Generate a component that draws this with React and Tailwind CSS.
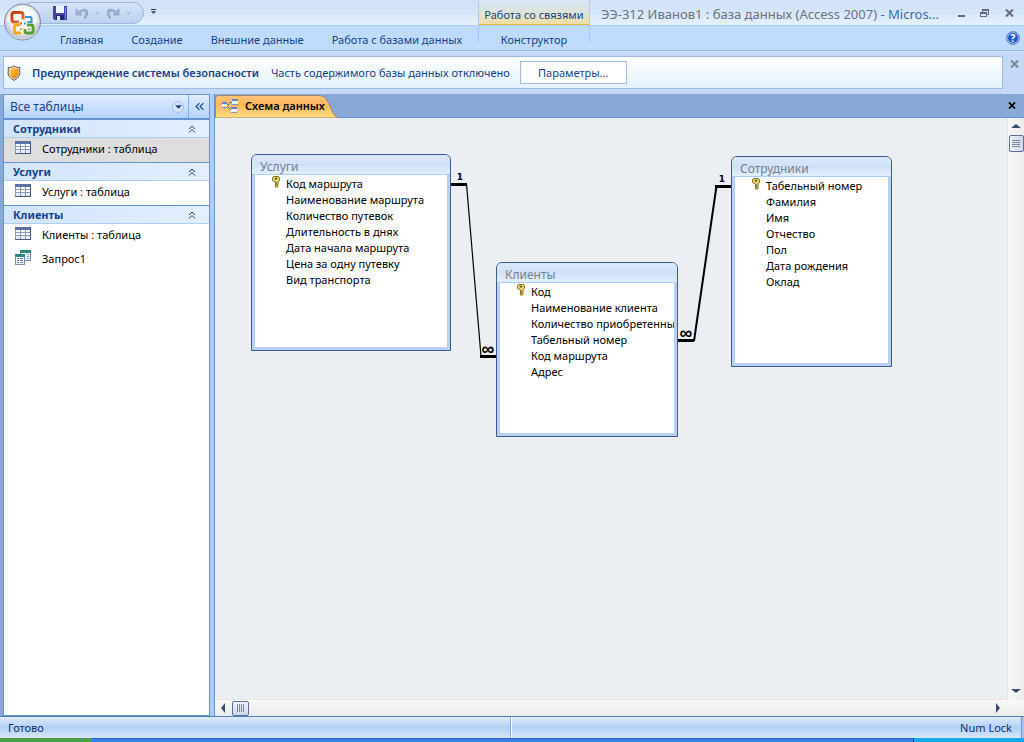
const ribbonTabs = ["Главная", "Создание", "Внешние данные", "Работа с базами данных"]

const navGroups = [
  { name: "Сотрудники", items: [{ label: "Сотрудники : таблица", kind: "table", selected: true }] },
  { name: "Услуги", items: [{ label: "Услуги : таблица", kind: "table" }] },
  {
    name: "Клиенты",
    items: [
      { label: "Клиенты : таблица", kind: "table" },
      { label: "Запрос1", kind: "query" },
    ],
  },
]

const schema = [
  {
    name: "Услуги",
    place: "left-[36px] top-[36px] w-[200px] h-[197px]",
    fields: [
      "Код маршрута",
      "Наименование маршрута",
      "Количество путевок",
      "Длительность в днях",
      "Дата начала маршрута",
      "Цена за одну путевку",
      "Вид транспорта",
    ],
  },
  {
    name: "Клиенты",
    place: "left-[281px] top-[144px] w-[182px] h-[175px]",
    fields: [
      "Код",
      "Наименование клиента",
      "Количество приобретенны",
      "Табельный номер",
      "Код маршрута",
      "Адрес",
    ],
  },
  {
    name: "Сотрудники",
    place: "left-[516px] top-[38px] w-[161px] h-[211px]",
    fields: ["Табельный номер", "Фамилия", "Имя", "Отчество", "Пол", "Дата рождения", "Оклад"],
  },
]

function OfficeLogo() {
  return (
    <svg viewBox="0 0 40 40" className="h-10 w-10" fill="none">
      <defs>
        <radialGradient id="orb" cx="50%" cy="45%" r="55%">
          <stop offset="0" stopColor="#ffffff" />
          <stop offset="0.6" stopColor="#f0f1f5" />
          <stop offset="0.88" stopColor="#c0c8d6" />
          <stop offset="1" stopColor="#eef3fa" />
        </radialGradient>
        <linearGradient id="red" x1="0" y1="0" x2="1" y2="1">
          <stop offset="0" stopColor="#c9380f" />
          <stop offset="1" stopColor="#f0762c" />
        </linearGradient>
      </defs>
      <circle cx="20.500" cy="20" r="18" fill="url(#orb)" stroke="#7f8ca3" />
      <path d="M4 20a16.500 16.500 0 0 1 33 0c-8 3-25 3-33 0z" fill="#fff" opacity="0.5" />
      <path d="M17 20h-5q-2 0-2-2v-5.500q0-2 2-2h7q2 0 2 2v5" stroke="url(#red)" strokeWidth="3" />
      <path d="M23 15h5q1.500 0 1.500 1.500v3.500h-4" stroke="#3f92dc" strokeWidth="2.200" />
      <path d="M18 23h-3.500q-2 0-2 2v4.500q0 1.500 1.500 1.500h5" stroke="#f5ab1d" strokeWidth="2.800" />
      <path d="M25 23h4.500q1.500 0 1.500 1.500v5q0 1.500-1.500 1.500h-5q-1.500 0-1.500-1.500V27" stroke="#5aa02e" strokeWidth="2.800" />
      <path d="M18 20.500h2v2h-2z" fill="#e85a20" />
      <path d="M22 20.500h2v2h-2z" fill="#3f92dc" />
      <path d="M18 26h2v2h-2z" fill="#f5ab1d" />
      <path d="M26 26h2v2h-2z" fill="#8cc152" />
    </svg>
  )
}

function SaveIcon() {
  return (
    <svg viewBox="0 0 14 14" className="h-[14px] w-[14px]" shapeRendering="crispEdges">
      <path d="M0 0h14v14H1l-1-1z" fill="#4145a8" />
      <path d="M3 0h8v7H3z" fill="#eef2fb" />
      <path d="M3 9h8v5H3z" fill="#25276e" />
      <path d="M4 10h3v4H4z" fill="#dfe6f5" />
      <path d="M12 1h1v12h-1z" fill="#7d84d6" />
    </svg>
  )
}

function UndoIcon({ flip }) {
  return (
    <svg viewBox="0 0 14 14" className={flip ? "h-[14px] w-[14px] -scale-x-100" : "h-[14px] w-[14px]"}>
      <path d="M1 3v6h6L5 7q3-3 5-1.500T9 12l1 .5q4-3.500 2.500-7.500T4 5.500z" fill="#9fb2d4" stroke="#8ba1c8" strokeWidth="0.8" />
    </svg>
  )
}

function Caret({ className }) {
  return (
    <svg viewBox="0 0 6 3" className={className}>
      <path d="M0 0h6L3 3z" fill="currentColor" />
    </svg>
  )
}

function ShieldIcon() {
  return (
    <svg viewBox="0 0 14 16" className="h-4 w-[14px]">
      <defs>
        <linearGradient id="shield" x1="0" y1="0" x2="1" y2="1">
          <stop offset="0" stopColor="#ffe28a" />
          <stop offset="0.5" stopColor="#f9a21b" />
          <stop offset="1" stopColor="#d96a0c" />
        </linearGradient>
      </defs>
      <path d="M7 .7 9 2.200 13 2.500 12.600 5Q14.500 11.500 7 15.400-.5 11.500 1.400 5L1 2.500 5 2.200z" fill="#e8e8e8" stroke="#4a4a4a" strokeWidth="0.9" />
      <path d="M7 2.200 9 3.500 12 3.700 11.600 6Q12.800 10.800 7 14 1.200 10.800 2.400 6L2 3.700 5 3.500z" fill="url(#shield)" />
    </svg>
  )
}

function TableIcon() {
  return (
    <svg viewBox="0 0 16 13" className="mb-1 h-[13px] w-4 shrink-0" shapeRendering="crispEdges">
      <path d="M0 0h16v13H0z" fill="#8b9abb" />
      <path d="M0 0h16v3H0z" fill="#5b71a5" />
      <path d="M0 12h16v1H0zM15 0h1v13h-1z" fill="#48587f" />
      <g fill="#fff">
        <path d="M1 3h4v2H1zM6 3h4v2H6zM11 3h4v2h-4z" />
        <path d="M1 6h4v2H1zM6 6h4v2H6zM11 6h4v2h-4z" />
        <path d="M1 9h4v3H1zM6 9h4v3H6zM11 9h4v3h-4z" fill="#e6ebf5" />
      </g>
    </svg>
  )
}

function QueryIcon() {
  return (
    <svg viewBox="0 0 16 15" className="mb-1 h-[15px] w-4 shrink-0" shapeRendering="crispEdges">
      <path d="M5 0h11v11H5z" fill="#7a8db0" />
      <path d="M6 3h9v7H6z" fill="#f4f8fc" />
      <path d="M5 0h11v3H5z" fill="#2f8580" />
      <path d="M12 4h2v1h-2zM12 6h2v1h-2zM12 8h2v1h-2z" fill="#7a9ac8" />
      <path d="M0 4h10v11H0z" fill="#7a8db0" />
      <path d="M1 7h8v7H1z" fill="#f4f8fc" />
      <path d="M0 4h10v3H0z" fill="#2f8580" />
      <path d="M2 8h2v1H2zM5 8h3v1H5zM2 10h2v1H2zM5 10h3v1H5zM2 12h2v1H2zM5 12h3v1H5z" fill="#5f82ba" />
    </svg>
  )
}

function KeyIcon() {
  return (
    <svg viewBox="0 0 8 12" className="h-3 w-2">
      <path d="M1.500.5h5l1 1.500v2.500L6 6v4.500L4.500 11.500 3.500 11V6L.5 4.500V2z" fill="#e9d76c" stroke="#77681c" strokeWidth="0.9" />
      <path d="M3 2h2v1.200H3zM4.500 6v4" stroke="#77681c" strokeWidth="0.7" fill="#77681c" />
    </svg>
  )
}

function SchemaIcon() {
  return (
    <svg viewBox="0 0 16 14" className="h-[14px] w-4" shapeRendering="crispEdges">
      <path d="M5 6 10 3M5 7l4 4" stroke="#5b6f96" fill="none" />
      <path d="M0 4h5v5H0zM10 0h6v5h-6zM9 8h6v5H9z" fill="#e9f0fa" />
      <path d="M0 8h5v1H0zM10 5h6v1h-6zM9 13h6v1H9z" fill="#7f92b8" />
      <path d="M0 3h5v2H0zM10 0h6v2h-6zM9 8h6v2H9z" fill="#5a86cc" />
    </svg>
  )
}

function Cross({ className }) {
  return (
    <svg viewBox="0 0 9 8" className={className}>
      <path d="M1 .5 8 7.500M8 .5 1 7.500" stroke="currentColor" strokeWidth="2" />
    </svg>
  )
}

function Chevrons({ className }) {
  return (
    <svg viewBox="0 0 8 8" className={className} fill="none" stroke="currentColor">
      <path d="M1 4l3-3 3 3M1 7.500l3-3 3 3" />
    </svg>
  )
}

function Header() {
  return (
    <header className="relative shrink-0 bg-[#bfdbff]">
      <div className="flex h-[26px] border-b border-[#a9cdf3] bg-linear-to-b from-[#cfe0f7] via-[#d6e6fa] to-[#e6f1fd]">
        <div className="flex w-[478px] shrink-0 items-start pt-[2px] pl-[28px]">
          <div className="flex h-[22px] w-[116px] items-center rounded-r-full border border-[#9db7dc] bg-linear-to-b from-[#d5e3f6] to-[#bdd1ee] pl-[24px]">
            <button aria-label="Сохранить"><SaveIcon /></button>
            <button aria-label="Отменить" className="ml-2 flex items-center gap-[6px] text-[#a9b6cb]">
              <UndoIcon />
              <Caret className="h-[3px] w-[5px]" />
            </button>
            <button aria-label="Вернуть" className="ml-[6px] flex items-center gap-[6px] text-[#a9b6cb]">
              <UndoIcon flip />
              <Caret className="h-[3px] w-[5px]" />
            </button>
          </div>
          <button aria-label="Настройка панели" className="mt-[7px] ml-[7px] flex flex-col gap-px text-[#1c3d73]">
            <span className="h-px w-[5px] bg-current" />
            <Caret className="h-[3px] w-[5px]" />
          </button>
        </div>
        <div className="flex w-28 shrink-0 items-end justify-center border-x border-b border-x-[#b9cbe0] border-b-[#e8b93c] bg-linear-to-b from-[#d6e5f8] via-[#dfe3d6] to-[#f0dfa4] pb-px text-[11px] leading-4 whitespace-nowrap text-[#15428b]">
          Работа со связями
        </div>
        <h1 className="min-w-0 flex-1 truncate pt-[5px] pl-[11px] text-[13px] leading-[18px] text-[#6b7280]">
          ЭЭ-312 Иванов1 : база данных (Access 2007) <span className="text-[#3b6cb5]">- Micros...</span>
        </h1>
        <div className="flex w-[72px] shrink-0 items-start gap-[15px] pt-[9px] pl-[6px] text-[#636b7c]">
          <button aria-label="Свернуть" className="mt-[6px] h-[2px] w-[7px] bg-current" />
          <button aria-label="Развернуть">
            <svg viewBox="0 0 9 8" className="h-2 w-[9px]" shapeRendering="crispEdges">
              <path d="M2 0h7v6H7V5h1V2H3v1H2z" fill="currentColor" />
              <path d="M0 3h7v5H0zM1 5v2h5V5z" fill="currentColor" fillRule="evenodd" />
            </svg>
          </button>
          <button aria-label="Закрыть" className="ml-px"><Cross className="h-2 w-[9px]" /></button>
        </div>
      </div>
      <div className="flex h-[25px] border-b border-[#93b7e8] text-[11px] leading-4 text-[#15428b]">
        <nav className="flex w-[478px] shrink-0 items-center gap-[28px] pt-1 pl-[60px] whitespace-nowrap">
          {ribbonTabs.map((tab) => (
            <button key={tab}>{tab}</button>
          ))}
        </nav>
        <button className="mb-2 w-28 shrink-0 border-x border-[#a9c6ea] pt-[6px]">
          Конструктор
        </button>
        <div className="flex flex-1 items-center justify-end pr-1">
          <button
            aria-label="Справка"
            className="flex h-[14px] w-[14px] items-center justify-center rounded-full border border-[#6f93cf] bg-[#2159c7] text-[10px] font-bold text-white ring-1 ring-white/60 ring-inset"
          >
            ?
          </button>
        </div>
      </div>
      <button aria-label="Кнопка Office" className="absolute top-[2px] left-[2px]">
        <OfficeLogo />
      </button>
    </header>
  )
}

function MessageBar() {
  return (
    <div className="flex shrink-0 items-start border-t border-[#d5e6fb] bg-[#c3d9f7] pt-1 pr-[5px] pb-[5px] pl-[3px]">
      <div className="flex h-[33px] flex-1 items-center border border-[#9dbbdc] bg-linear-to-b from-white to-[#e2f2fd] pl-[3px] text-[11px] leading-4 whitespace-nowrap text-[#15428b]">
        <ShieldIcon />
        <strong className="ml-[11px] font-semibold">Предупреждение системы безопасности</strong>
        <span className="ml-3">Часть содержимого базы данных отключено</span>
        <button className="ml-[10px] h-[23px] w-[107px] border border-[#9dbbdc] bg-white">Параметры...</button>
      </div>
      <button aria-label="Закрыть сообщение" className="mt-1 ml-[7px] text-[#7d8694]">
        <Cross className="h-2 w-[9px]" />
      </button>
    </div>
  )
}

function NavPane() {
  return (
    <aside className="flex w-[215px] shrink-0 border-r border-[#6593cf] bg-[#a8cdff]">
      <div className="w-[3px] bg-[#88a9d8]" />
      <div className="flex w-[207px] flex-col border border-[#6593cf] bg-white">
        <div className="flex h-[25px] items-center border-b-2 border-[#6593cf] bg-linear-to-b from-[#e0edff] to-[#b3d3fc] pl-[6px] text-[12px] text-[#15428b]">
          <h2 className="flex-1 pt-px">Все таблицы</h2>
          <button
            aria-label="Выбор категории"
            className="mr-1 flex h-3 w-3 items-center justify-center rounded-full border border-[#a9bcd8] bg-[#d9e5f6] text-[#15428b]"
          >
            <Caret className="h-1 w-[7px]" />
          </button>
          <button aria-label="Скрыть область" className="flex h-full w-[21px] items-center justify-center border-l border-[#86b0e8]">
            <Chevrons className="h-[9px] w-[9px] -rotate-90" />
          </button>
        </div>
        {navGroups.map((group) => (
          <section key={group.name} className="border-b border-[#6593cf] last:border-b-0">
            <h3 className="flex h-[18px] items-center justify-between border-b border-[#aecdf7] bg-linear-to-r from-[#d2e4fd] to-[#e3efff] pt-px pr-[13px] pl-[9px] text-[11px] leading-4 font-bold text-[#15428b]">
              {group.name}
              <button aria-label="Свернуть группу"><Chevrons className="h-2 w-2" /></button>
            </h3>
            <ul>
              {group.items.map((item) => (
                <li
                  key={item.label}
                  className={
                    item.selected
                      ? "flex h-6 items-center gap-[11px] bg-[#dedede] pb-0.5 pl-[11px] text-[11px] leading-4"
                      : "flex h-6 items-center gap-[11px] pb-0.5 pl-[11px] text-[11px] leading-4"
                  }
                >
                  {item.kind === "table" ? <TableIcon /> : <QueryIcon />}
                  {item.label}
                </li>
              ))}
            </ul>
          </section>
        ))}
      </div>
    </aside>
  )
}

function TableWindow({ table }) {
  return (
    <section className={`absolute flex flex-col overflow-hidden rounded-t-md border border-[#3d5a8c] bg-[#b7d0f2] ${table.place}`}>
      <h3 className="h-5 shrink-0 border-b border-[#a9cff7] bg-linear-to-b from-[#dce9fb] via-[#cfe1f9] to-[#e2effd] pt-1 pl-2 text-[12px] leading-4 text-[#787f8c]">
        {table.name}
      </h3>
      <ul className="mx-[3px] mb-[3px] flex-1 overflow-hidden bg-white pt-px text-[11px] leading-4 whitespace-nowrap text-black">
        {table.fields.map((field, i) => (
          <li key={field} className="flex h-4">
            <span className="w-[31px] shrink-0 pl-[17px]">{i === 0 && <KeyIcon />}</span>
            {field}
          </li>
        ))}
      </ul>
    </section>
  )
}

function Relations() {
  return (
    <svg className="absolute top-0 left-0 h-[320px] w-[700px]" fill="none" stroke="#000">
      <path d="M236 66.500h16M265 238.500h16" strokeWidth="3" />
      <path d="M251.500 66 266 238" strokeWidth="1.2" />
      <path d="M500 68.500h16M463 222.500h16" strokeWidth="3" />
      <path d="M501.500 68 479 223" strokeWidth="2" />
      <g fill="#000" stroke="none" fontFamily="DejaVu Sans, sans-serif" fontWeight="bold" textAnchor="middle">
        <text x="245" y="62" fontSize="9">1</text>
        <text x="507" y="64" fontSize="9">1</text>
      </g>
      <g fill="#000" stroke="none" fontFamily="Liberation Sans, sans-serif" fontWeight="bold" textAnchor="middle">
        <text x="273" y="237" fontSize="18">∞</text>
        <text x="471" y="221" fontSize="18">∞</text>
      </g>
    </svg>
  )
}

function ScrollArrow({ label, path }) {
  return (
    <button aria-label={label} className="flex h-4 w-4 items-center justify-center">
      <svg viewBox="0 0 10 10" className="h-[10px] w-[10px]">
        <path d={path} fill="#3d4a73" />
      </svg>
    </button>
  )
}

function Workspace() {
  return (
    <main className="flex min-w-0 flex-1 flex-col bg-[#ebeef2]">
      <div className="flex h-6 shrink-0 items-center justify-between border-b border-[#6593cf] bg-[#88a9d8] pr-2">
        <button className="relative flex h-6 w-[124px] items-center gap-[7px] pl-[7px] text-[11px] font-semibold text-black">
          <svg viewBox="0 0 124 24" className="absolute inset-0 h-6 w-[124px]">
            <defs>
              <linearGradient id="tab" x1="0" y1="0" x2="0" y2="1">
                <stop offset="0" stopColor="#ffc47c" />
                <stop offset="0.4" stopColor="#ffb560" />
                <stop offset="1" stopColor="#ffdf80" />
              </linearGradient>
            </defs>
            <path d="M.5 24V4Q.5 1.500 3 1.500H104Q110 1.500 113 8L118 19Q120 23.500 124 23.500V24z" fill="url(#tab)" stroke="#9c8a6d" />
          </svg>
          <span className="relative"><SchemaIcon /></span>
          <span className="relative pt-px whitespace-nowrap">Схема данных</span>
        </button>
        <button aria-label="Закрыть вкладку" className="text-black"><Cross className="h-[7px] w-2" /></button>
      </div>
      <div className="flex min-h-0 flex-1">
        <div className="relative min-w-0 flex-1 overflow-hidden border-r border-b border-[#ebe6d8]">
          <Relations />
          {schema.map((table) => (
            <TableWindow key={table.name} table={table} />
          ))}
        </div>
        <div className="flex w-4 shrink-0 flex-col items-center bg-linear-to-r from-[#f8f8f8] to-[#ececec] pb-px">
          <ScrollArrow label="Вверх" path="M5 3 10 7H0z" />
          <div className="mt-px flex h-[17px] w-[15px] flex-col items-center justify-center gap-px rounded-[2px] border border-[#5c6f9c] bg-linear-to-r from-[#f0f3f8] to-[#cfd8e6]">
            <span className="h-px w-2 bg-[#7c879c]" />
            <span className="h-px w-2 bg-[#7c879c]" />
            <span className="h-px w-2 bg-[#7c879c]" />
            <span className="h-px w-2 bg-[#7c879c]" />
          </div>
          <div className="flex-1" />
          <ScrollArrow label="Вниз" path="M5 7 10 3H0z" />
        </div>
      </div>
      <div className="flex h-4 shrink-0 items-center bg-linear-to-b from-[#f8f8f8] to-[#ececec] pr-[18px]">
        <ScrollArrow label="Влево" path="M3 5 7 0v10z" />
        <div className="ml-px flex h-[15px] w-[17px] items-center justify-center gap-px rounded-[2px] border border-[#5c6f9c] bg-linear-to-b from-[#f0f3f8] to-[#cfd8e6]">
          <span className="h-2 w-px bg-[#7c879c]" />
          <span className="h-2 w-px bg-[#7c879c]" />
          <span className="h-2 w-px bg-[#7c879c]" />
          <span className="h-2 w-px bg-[#7c879c]" />
        </div>
        <div className="flex-1" />
        <ScrollArrow label="Вправо" path="M7 5 3 0v10z" />
      </div>
    </main>
  )
}

export default function App() {
  return (
    <div className="flex h-screen flex-col overflow-hidden bg-[#c3d9f7] font-['Noto_Sans',sans-serif]">
      <Header />
      <MessageBar />
      <div className="flex min-h-0 flex-1">
        <NavPane />
        <Workspace />
      </div>
      <footer className="shrink-0">
        <div className="flex h-[22px] items-center border-t border-[#4d80bc] bg-linear-to-b from-[#deebfc] via-[#b4d0f5] to-[#d6e5fa] text-[11px] leading-4 text-[#0f2f6b]">
          <span className="flex h-full w-[511px] items-center border-r border-[#8caddb] pl-2">Готово</span>
          <span className="flex h-full flex-1 items-center justify-end border-l border-white pr-[9px]">Num Lock</span>
          <span className="h-full w-[3px] border-l border-[#6d94cc] bg-[#a9c6ee]" />
        </div>
        <div className="flex h-1 bg-[#2f6fdb]">
          <div className="w-[92px] bg-[#4f9e4b]" />
          <div className="flex-1 border-t border-[#2160d0] bg-[#3a80e6]" />
          <div className="w-[111px] border-l border-[#0b3f9c] bg-[#14a9ee]" />
        </div>
      </footer>
    </div>
  )
}
